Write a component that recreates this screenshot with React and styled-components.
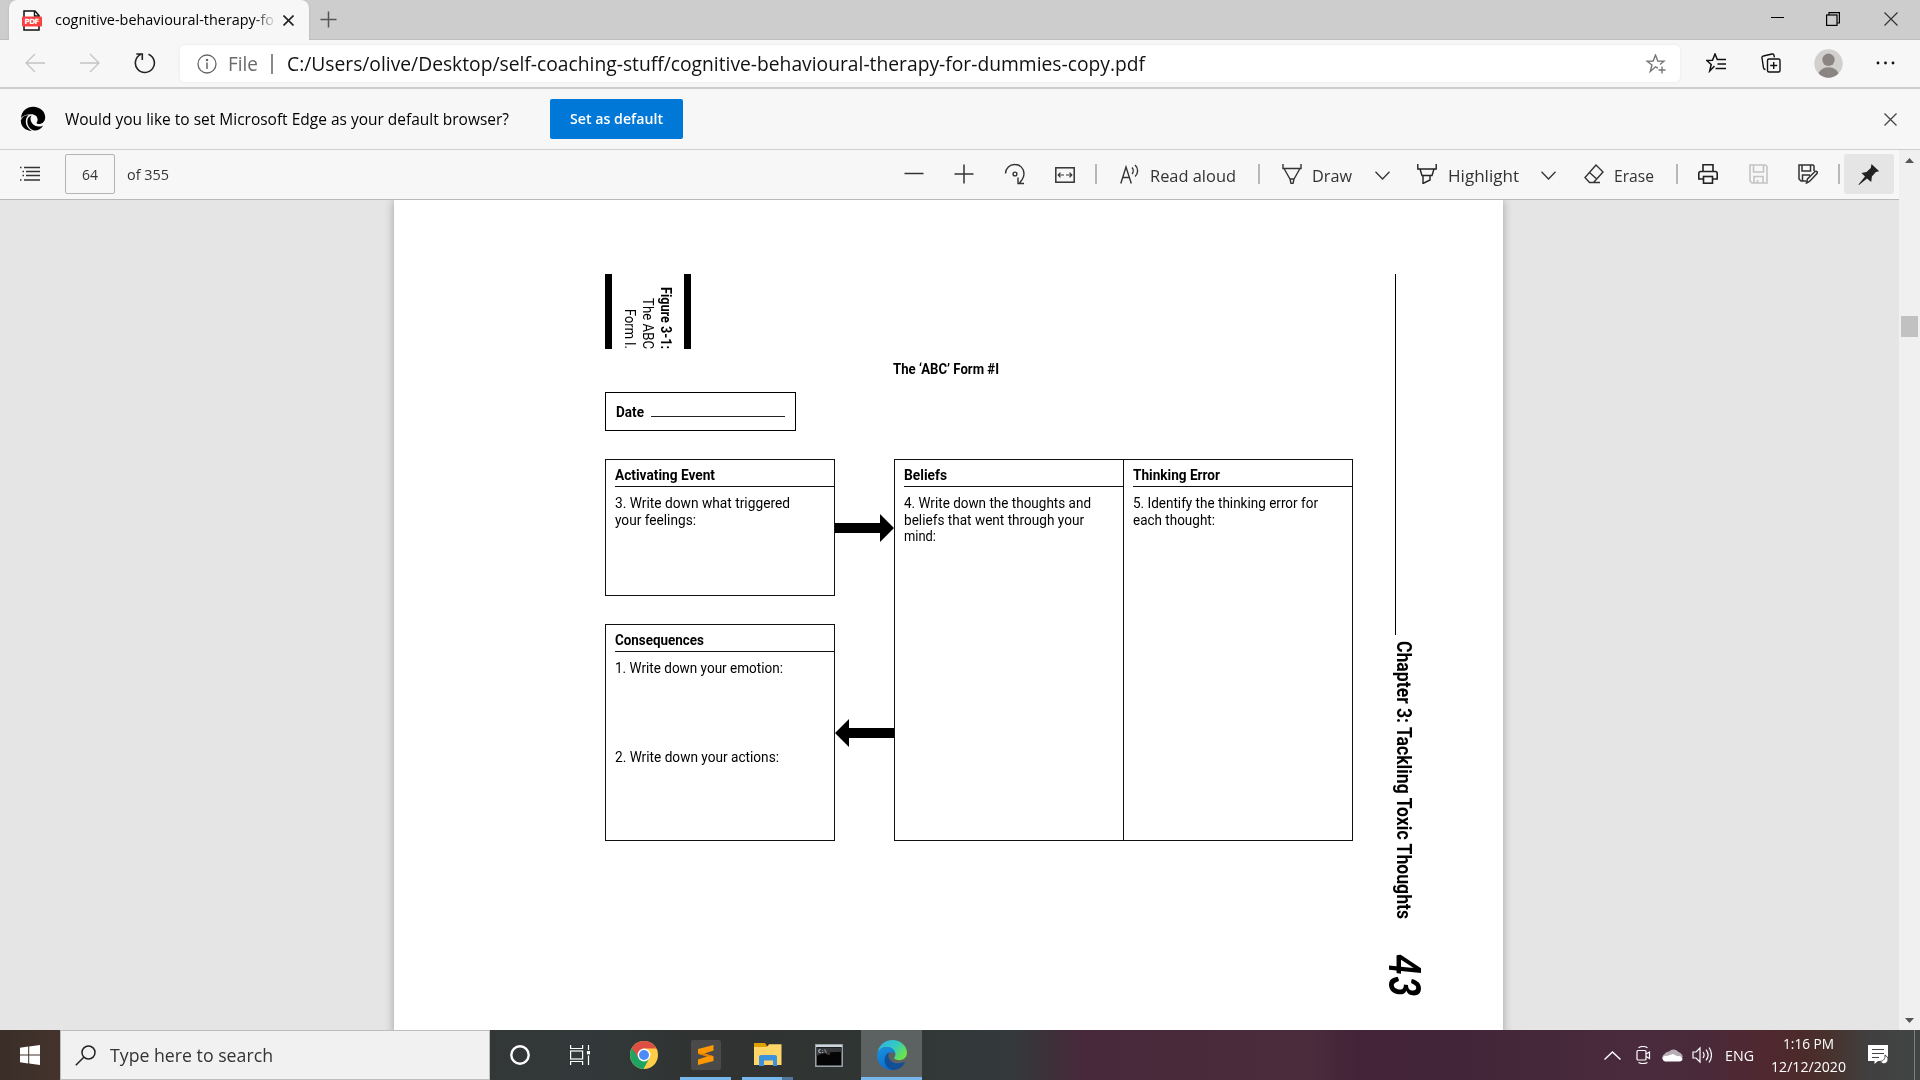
import React, { useLayoutEffect, useRef, useState } from "react";
import styled, { createGlobalStyle, css } from "styled-components";

const GlobalStyle = createGlobalStyle`
  * { box-sizing: border-box; }
  html, body { margin: 0; padding: 0; overflow: hidden; }
  body { font-family: "Open Sans", "Noto Sans", sans-serif; color: #000; }
  svg { display: block; flex: none; }
`;

/* ---------- fitted text: squeezes a line to the width it is given ---------- */
const FitBox = styled.span`
  display: block;
  flex: none;
  white-space: nowrap;
  ${(p) => (p.$vertical ? css`height: ${p.$size}px;` : css`width: ${p.$size}px;`)}
`;
const FitInner = styled.span`
  display: inline-block;
  white-space: nowrap;
  transform-origin: 0 0;
`;
function Fit({ size, vertical, children }) {
  const ref = useRef(null);
  const [scale, setScale] = useState(1);
  useLayoutEffect(() => {
    const box = getComputedStyle(ref.current);
    const natural = parseFloat(vertical ? box.height : box.width);
    if (natural) setScale(size / natural);
  }, [size, vertical, children]);
  return (
    <FitBox $size={size} $vertical={vertical}>
      <FitInner ref={ref} style={{ transform: vertical ? `scaleY(${scale})` : `scaleX(${scale})` }}>
        {children}
      </FitInner>
    </FitBox>
  );
}

/* ---------- shell ---------- */
const Screen = styled.div`
  width: 1920px;
  height: 1080px;
  display: flex;
  flex-direction: column;
  background: #f7f7f7;
  overflow: hidden;
`;
const Slot = styled.div`
  flex: none;
  display: flex;
  align-items: center;
  justify-content: center;
  width: ${(p) => p.$w}px;
  height: ${(p) => p.$h || 24}px;
  margin-left: ${(p) => p.$ml || 0}px;
  margin-top: ${(p) => p.$mt || 0}px;
`;
const Spacer = styled.div`flex: 1;`;

/* ---------- tab strip ---------- */
const TabStrip = styled.div`
  height: 40px;
  flex: none;
  display: flex;
  background: #cdcdcd;
  padding-left: 9px;
  box-shadow: inset 0 -1px 0 #bdbdbd;
`;
const Tab = styled.div`
  width: 300px;
  height: 40px;
  background: #f7f7f7;
  border-radius: 8px 8px 0 0;
  box-shadow: 0 0 2px #aaa;
  clip-path: inset(0 -3px 0 -3px);
  display: flex;
  align-items: center;
  padding-left: 13px;
`;
const TabTitle = styled.div`
  width: 219px;
  margin-left: 13px;
  font-size: 14.5px;
  line-height: 20px;
  mask-image: linear-gradient(90deg, #000 91%, transparent 101%);
`;

/* ---------- address row ---------- */
const AddressRow = styled.div`
  height: 49px;
  flex: none;
  display: flex;
  align-items: center;
  padding: 0 0 1px 25px;
  border-bottom: 2px solid #cccccc;
`;
const AddressBox = styled.div`
  width: 1500px;
  height: 37px;
  margin-left: 24px;
  margin-top: 1px;
  border-radius: 5px;
  background: #fff;
  box-shadow: 0 0 3px #e6e6e6;
  display: flex;
  align-items: center;
  padding-left: 17px;
`;
const AddressText = styled.div`
  font-size: 19.5px;
  line-height: 28px;
  color: ${(p) => p.$color};
  margin-left: ${(p) => p.$ml}px;
`;
const Bar = styled.div`
  flex: none;
  width: 2px;
  height: 20px;
  background: ${(p) => p.$color || "#b8b8b8"};
  margin-left: ${(p) => p.$ml}px;
`;

/* ---------- info bar ---------- */
const InfoBar = styled.div`
  height: 61px;
  flex: none;
  display: flex;
  align-items: center;
  padding-left: 20px;
  border-bottom: 1px solid #cfcfcf;
`;
const InfoText = styled.div`
  margin-left: 20px;
  font-size: 15.5px;
  line-height: 22px;
`;
const DefaultButton = styled.button`
  width: 133px;
  height: 40px;
  margin: 0 0 0 41px;
  border: 0;
  border-radius: 2px;
  background: #0078d7;
  color: #fff;
  padding: 0 0 0 20px;
  text-align: left;
  font: 600 14.5px/22px "Open Sans", "Noto Sans", sans-serif;
`;

/* ---------- pdf viewer ---------- */
const Viewer = styled.div`
  height: 880px;
  flex: none;
  display: flex;
`;
const ViewerMain = styled.div`
  width: 1899px;
  display: flex;
  flex-direction: column;
`;
const Tools = styled.div`
  height: 50px;
  flex: none;
  display: flex;
  align-items: center;
  padding: 0 0 1px 20px;
  border-bottom: 1px solid #b9b9b9;
  color: #333;
`;
const PageInput = styled.div`
  width: 50px;
  height: 40px;
  margin-left: 25px;
  border: 1px solid #b4b4b4;
  border-radius: 2px;
  display: flex;
  align-items: center;
  justify-content: center;
  padding-top: 1px;
  font-size: 14.5px;
  line-height: 20px;
`;
const PageTotal = styled.div`
  margin: 1px 0 0 12px;
  font-size: 14.5px;
  line-height: 20px;
`;
const ToolLabel = styled.div`
  margin-left: ${(p) => p.$ml}px;
  margin-top: 4px;
  font-size: 16.5px;
  line-height: 24px;
`;
const PinButton = styled.div`
  width: 50px;
  height: 40px;
  margin-left: 4px;
  border-radius: 3px;
  background: #e5e5e5;
  display: flex;
  align-items: center;
  justify-content: center;
`;
const ScrollTrack = styled.div`
  width: 21px;
  background: #f0f0f0;
  display: flex;
  flex-direction: column;
  align-items: center;
  padding-top: 8px;
`;
const ScrollThumb = styled.div`
  width: 17px;
  height: 21px;
  background: #c1c1c1;
  margin: 153px 0 auto;
`;
const Canvas = styled.div`
  flex: 1;
  background: #e5e5e5;
  padding-left: 394px;
  overflow: hidden;
`;
const Paper = styled.div`
  width: 1109px;
  height: 860px;
  background: #fff;
  box-shadow: 0 0 9px rgba(0, 0, 0, 0.3);
  padding: 74px 0 0 211px;
  display: flex;
  font-family: Roboto, "Liberation Sans", sans-serif;
  font-size: 15px;
  line-height: 16.5px;
`;
const FormArea = styled.div`
  width: 749px;
  flex: none;
`;
const Caption = styled.div`
  width: 86px;
  height: 75px;
  border: solid #000;
  border-width: 0 7px;
  writing-mode: vertical-rl;
  display: flex;
  flex-direction: column;
  align-items: flex-end;
  padding-right: 9px;
  font-size: 15px;
  line-height: 18.2px;
  font-weight: 400;
`;
const Strong = styled.div`font-weight: 700;`;
const FormTitle = styled.div`
  margin: 11px 0 0 288px;
  font-weight: 700;
  line-height: 18px;
`;
const DateBox = styled.div`
  width: 191px;
  height: 39px;
  margin-top: 14px;
  border: 1px solid #000;
  display: flex;
  align-items: center;
  padding: 2px 0 0 9.5px;
  font-weight: 700;
`;
const DateRule = styled.div`
  width: 134px;
  height: 1px;
  margin: 7px 0 0 7.5px;
  background: #222;
`;
const Columns = styled.div`
  margin-top: 28px;
  height: 382px;
  display: flex;
`;
const LeftColumn = styled.div`
  width: 230px;
  display: flex;
  flex-direction: column;
  justify-content: space-between;
`;
const Panel = styled.section`
  width: 230px;
  height: ${(p) => p.$h}px;
  margin-left: ${(p) => p.$ml || 0}px;
  border: 1px solid #111;
  padding-left: 9px;
`;
const PanelHead = styled.div`
  height: 27px;
  padding-top: 4px;
  line-height: 23px;
  font-weight: 700;
  border-bottom: 1px solid #111;
`;
const PanelText = styled.div`
  margin-top: ${(p) => p.$mt || 8.4}px;
`;
const Arrows = styled.div`
  width: 59px;
  flex: none;
  padding-top: 55px;
  display: flex;
  flex-direction: column;
  gap: 177px;
`;
const SideColumn = styled.div`
  margin-left: 33px;
  width: 36px;
  display: flex;
  flex-direction: column;
`;
const SideRule = styled.div`
  width: 1px;
  height: 361px;
  margin-left: 8px;
  background: #000;
`;
const Chapter = styled.div`
  writing-mode: vertical-rl;
  font-size: 21px;
  line-height: 24px;
  font-weight: 700;
  margin: 6px 0 0 5px;
  width: 24px;
`;
const Folio = styled.div`
  writing-mode: vertical-rl;
  font: italic 900 44px/48px Lato, "Open Sans", sans-serif;
  margin: 35px 0 0 -5px;
  width: 48px;
`;

/* ---------- taskbar ---------- */
const Taskbar = styled.div`
  height: 50px;
  flex: none;
  display: flex;
  color: #fff;
  background: linear-gradient(90deg, #3a2e28 0, #44332c 60px, #333738 490px, #323839 600px, #303332 690px, #303433 860px,
    #343a3c 1010px, #3b3238 1044px, #48293c 1080px, #492a3a 1200px, #4a2c3c 1310px, #422338 1360px, #44263a 1480px,
    #4a2b3d 1640px, #492a3a 1700px, #50282f 1765px, #4c2a2a 1800px, #48322e 1830px, #414040 1870px, #424545 1920px);
`;
const StartButton = styled.div`
  width: 60px;
  display: flex;
  align-items: center;
  justify-content: center;
`;
const SearchBox = styled.div`
  width: 430px;
  height: 50px;
  background: #f1f1f1;
  border: 1px solid #bdbdbd;
  color: #333;
  display: flex;
  align-items: center;
  padding-left: 14px;
  font-size: 18.5px;
  line-height: 26px;
`;
const SearchLabel = styled.div`margin: -1px 0 0 14px;`;
const TaskButton = styled.div`
  width: ${(p) => p.$w}px;
  height: 50px;
  flex: none;
  display: flex;
  align-items: center;
  justify-content: center;
  margin-left: ${(p) => p.$ml || 0}px;
  background: ${(p) => (p.$active ? "#5c6162" : "transparent")};
  border-bottom: 3px solid ${(p) => (p.$open ? "#78b6ee" : "transparent")};
  padding-top: 3px;
`;
const GroupedEdge = styled.div`
  width: 11px;
  height: 3px;
  margin-top: 47px;
  background: #52779a;
`;
const Lang = styled.div`
  margin-left: 13px;
  font-size: 15px;
  line-height: 50px;
`;
const Clock = styled.div`
  width: 77px;
  margin-left: 16px;
  font-size: 15px;
  line-height: 23px;
  padding-top: 2px;
  display: flex;
  flex-direction: column;
  align-items: center;
`;
const PeekEdge = styled.div`
  width: 1px;
  height: 50px;
  margin: 0 5px 0 25px;
  background: #7d8080;
`;

/* ---------- icons ---------- */
const Svg = ({ w, h = w, sw = 1.3, c = "#333", children }) => (
  <svg width={w} height={h} viewBox={`0 0 ${w} ${h}`} fill="none" stroke={c} strokeWidth={sw}>
    {children}
  </svg>
);
const Cross = ({ s = 13, c = "#222", sw = 1.3 }) => (
  <Svg w={s} c={c} sw={sw}><path d={`M.5 .5L${s - 0.5} ${s - 0.5}M${s - 0.5} .5L.5 ${s - 0.5}`} /></Svg>
);
const PdfIcon = () => (
  <svg width="20" height="21" viewBox="0 0 20 21">
    <path d="M2 9V1h11l4 4.5V20H2z" fill="#fff" stroke="#111" strokeWidth="1.5" />
    <path d="M12.5 1v5H17" fill="none" stroke="#111" strokeWidth="1.4" />
    <rect x="0" y="6.5" width="20" height="10" rx="1" fill="#fb4141" />
    <text x="10" y="14.4" textAnchor="middle" textLength="15" fontFamily="DejaVu Sans" fontSize="7.2" fontWeight="700" fill="#fff">PDF</text>
  </svg>
);
const Back = () => <Svg w={20} c="#c4c4c4"><path d="M20 10H1M10 1L1 10l9 9" /></Svg>;
const Forward = () => <Svg w={20} c="#c4c4c4"><path d="M0 10h19M10 1l9 9-9 9" /></Svg>;
const Refresh = () => (
  <Svg w={22} c="#222" sw={1.6}><path d="M14.5 2.2A9.5 9.5 0 1 1 6.8 2.4M2.3 2h6v6" /></Svg>
);
const Info = () => (
  <Svg w={20} c="#666" sw={1.3}><circle cx="10" cy="10" r="9" /><path d="M10 8.5V15" strokeWidth="1.5" /><circle cx="10" cy="6" r=".6" fill="#666" /></Svg>
);
const StarAdd = () => (
  <Svg w={20} c="#767676" sw={1.4}>
    <path d="M12 14.2L9.500 12.8 4.300 17.500 6 11 1 7.200l6.200-.2L9.500 1l2.300 6 6.200.2-4 3.300M16 12.500v7M12.500 16h7" />
  </Svg>
);
const FavList = () => (
  <Svg w={20} c="#111" sw={1.5}>
    <path d="M8.500 13L3.700 18 5.200 11.500.8 7.500l5.700-.3L9 1l2.300 5.500H20M11.500 11H20M9.500 15.500H20" />
  </Svg>
);
const Collections = () => (
  <Svg w={20} c="#111" sw={1.4}>
    <rect x="6.500" y="6" width="12.500" height="13" rx="1.500" /><path d="M12.700 9v7M9.200 12.500h7M4.500 16.500c-1 0-1.800-.7-2-1.700L1 5c-.2-1 .4-1.800 1.400-2L11 1c1-.2 1.800.3 2 1.300l.4 2" />
  </Svg>
);
const Avatar = () => (
  <svg width="29" height="29" viewBox="0 0 29 29">
    <defs><clipPath id="av"><circle cx="14.500" cy="14.500" r="14.200" /></clipPath></defs>
    <circle cx="14.500" cy="14.500" r="14.200" fill="#d2d0ce" />
    <g clipPath="url(#av)" fill="#8a8583"><circle cx="14.500" cy="10.800" r="6.200" /><ellipse cx="14.500" cy="25.500" rx="10" ry="7.200" /></g>
  </svg>
);
const Dots = () => (
  <svg width="19" height="4" viewBox="0 0 19 4" fill="#111"><circle cx="2" cy="2" r="1.400" /><circle cx="9.500" cy="2" r="1.400" /><circle cx="17" cy="2" r="1.400" /></svg>
);
const EdgeMono = () => (
  <svg width="26" height="26" viewBox="0 0 26 26">
    <path d="M1 12C1.500 5 7 .8 13 .8c7.500 0 12.200 5.200 12.200 10.400 0 3.600-2.200 6.400-5.600 6.800-1.700.2-3-.4-3-1.200 0-.7 1-1.200 1-3.300 0-2.900-2.500-5.300-6.300-5.300C6.500 8.200 2.800 9.500 1 12z" fill="#000" />
    <path d="M.8 14.500C2 10.600 5 9 8.600 9.300 6.700 10.800 5.800 13 5.800 15.500c0 4 2.600 7.700 6.200 9.400C5.500 24.800.8 20.500.8 14.500z" fill="#000" />
    <path d="M7.300 15.500c0-3 1.700-5.300 4.300-5.900-1 1.100-1.200 2.500-1 4 .5 4 4 7 8 7 1.700 0 3.200-.4 4.600-1.200-2 3.200-5 5.200-8.500 5.200-4.200-.5-7.400-4.700-7.400-9.100z" fill="#000" />
  </svg>
);
const ListIcon = () => (
  <Svg w={20} h={16} c="#333" sw={1.3}>
    <path d="M4 1.500h16M6 5.500h14M6 9.500h14M4 14h16" /><path d="M0 1.500h1.500M2.500 5.500H4M2.500 9.500H4M0 14h1.500" />
  </Svg>
);
const Minus = () => <Svg w={20} sw={1.5}><path d="M.5 9.500h19" /></Svg>;
const Plus = ({ s = 20, c = "#333", sw = 1.5 }) => <Svg w={s} c={c} sw={sw}><path d={`M.5 ${s / 2}h${s - 1}M${s / 2} .5v${s - 1}`} /></Svg>;
const Rotate = () => (
  <Svg w={22} c="#333" sw={1.4}><path d="M1.500 10.500a9 9 0 0 1 9.500-9c5 0 9 4 9 9 0 4-2 6.800-4.500 9.500M14 14.500V20.500h6" /><circle cx="11" cy="11" r="1.900" /></Svg>
);
const FitWidth = () => (
  <Svg w={20} h={16} c="#333" sw={1.5}><rect x=".8" y=".8" width="18.400" height="14.400" /><path d="M3.500 8H9M11 8h5.500M5.500 5.700L3.200 8l2.300 2.300M14.500 5.700L16.800 8l-2.300 2.300" strokeWidth="1.2" /></Svg>
);
const ReadAloud = () => (
  <Svg w={20} c="#333" sw={1.4}><path d="M.8 19.500L6 3l5.300 16.500M2.500 13.500h7M12 3.500c1.600 1.800 1.600 4.700 0 6.500M15 1c3.500 3 3.500 8.500 0 11.500" /></Svg>
);
const Pen = () => (
  <Svg w={20} c="#333" sw={1.4}><path d="M1 0v4.500h18V0M2 4.500l6 10.500h4l6-10.500M8 15l1 4.500h2l1-4.500" /></Svg>
);
const Marker = () => (
  <Svg w={20} c="#222" sw={1.4}><path d="M.8 0v5h18.400V0M3 5l2 6.500h10L17 5M6 11.500v8l7-3.500v-4.500" /></Svg>
);
const Chevron = ({ w = 15, c = "#333" }) => <Svg w={w} h={9} c={c} sw={1.3}><path d={`M.5 .8L${w / 2} 8l${w / 2 - 0.5}-7.200`} /></Svg>;
const Eraser = () => (
  <Svg w={20} c="#333" sw={1.4}><path d="M12 1l7 7-9.500 10.500H5.500L1 13.500zM5.500 8.500l7.500 6.800M7 18.500h9" /></Svg>
);
const Printer = () => (
  <Svg w={20} c="#222" sw={1.6}><path d="M5 7V.8h10V7M5 15H.8V9.500c0-1.200.8-2 2-2h14.400c1.200 0 2 .8 2 2V15H15" /><rect x="5.500" y="12.500" width="9" height="6.700" /></Svg>
);
const Save = () => (
  <Svg w={19} h={20} c="#c4c4c4" sw={1.6}><path d="M1 1h15.500L18 2.500V19H3l-2-2zM4.500 1v7h10V1M5 19v-6.500h9V19M8.500 16v3" /></Svg>
);
const SaveAs = () => (
  <Svg w={20} c="#333" sw={1.5}><path d="M8 17H3l-2-2V1h14l1 1v5M4 1v6h8.500V1M4.500 17v-6H12M8.500 19l1-4L17 7.500c1.500-.8 2.800.5 2 2L11.500 17.500z" /></Svg>
);
const Pin = () => (
  <svg width="22" height="21" viewBox="0 0 22 21"><path d="M13.500 0l7.700 7.200-3.300.9-4 4.500-.7 5.300L9 14.500 1 21l-.5-.5 6.500-8L3.500 9l5-1 4.300-4z" fill="#222" /></svg>
);
const Tri = ({ down }) => (
  <svg width="9" height="5" viewBox="0 0 9 5"><path d={down ? "M0 0h9L4.500 5z" : "M0 5h9L4.500 0z"} fill="#555" /></svg>
);
const Arrow = ({ left }) => (
  <svg width="59" height="28" viewBox="0 0 59 28"><path d={left ? "M0 14L14 0v9h45v10H14v9z" : "M59 14L45 0v9H0v10h45v9z"} fill="#000" /></svg>
);
const WinLogo = () => (
  <svg width="20" height="20" viewBox="0 0 20 20" fill="#fff"><path d="M0 2.800L8.200 1.600V9.500H0zM9.200 1.500L20 0v9.500H9.200zM0 10.500h8.200v7.900L0 17.300zM9.200 10.500H20V20L9.200 18.500z" /></svg>
);
const Magnifier = () => <Svg w={21} c="#222" sw={1.5}><circle cx="13.500" cy="7.500" r="6.500" /><path d="M9 12L.8 20.200" /></Svg>;
const TaskView = () => (
  <Svg w={20} h={20} c="#fff" sw={1.2}><path d="M.6 0v3.500h12V0M.6 20v-3.500h12V20M18.500 0v5M18.500 10.500V20" /><rect x=".6" y="6" width="12" height="8" /><rect x="17.500" y="6.700" width="2" height="2" fill="#fff" /></Svg>
);
const Chrome = () => (
  <svg width="28" height="28" viewBox="0 0 28 28">
    <circle cx="14" cy="14" r="14" fill="#ffcd46" />
    <path d="M14 14L1.900 7A14 14 0 0 0 13.500 28l6-11z" fill="#1ea362" />
    <path d="M14 7.500h12.400A14 14 0 0 0 1.900 7l6.500 10z" fill="#dd4f43" />
    <circle cx="14" cy="14" r="6.400" fill="#fff" /><circle cx="14" cy="14" r="5" fill="#4c8bf5" />
  </svg>
);
const Sublime = () => (
  <svg width="30" height="30" viewBox="0 0 30 30">
    <rect width="30" height="30" rx="2" fill="#4a4a4a" />
    <path d="M22.500 5v5.500l-9 3 9 2.700V21L7 25v-5.500l9-3-9-2.700V9z" fill="#ff9800" />
    <path d="M7 13.800l9 2.700 6.500-.3-9-2.700z" fill="#e07c00" />
  </svg>
);
const Explorer = () => (
  <svg width="28" height="24" viewBox="0 0 28 24">
    <path d="M0 0h11l2 3h14v4H0z" fill="#e0a100" /><path d="M0 4h13l2-2.800h12.500V22H0z" fill="#ffd667" />
    <path d="M5 23v-9c0-1.100.9-2 2-2h14c1.100 0 2 .9 2 2v9h-4v-5.500h-9V23z" fill="#3c92dc" />
  </svg>
);
const Terminal = () => (
  <svg width="28" height="23" viewBox="0 0 28 23">
    <rect x=".8" y=".8" width="26.400" height="21.400" fill="#050505" stroke="#9ba7ae" strokeWidth="1.500" />
    <path d="M1 1h26v2H1z" fill="#cdd6dc" /><path d="M1.500 3.500h25V8C17 7.500 8 8.500 1.500 12z" fill="#34383b" />
    <text x="3" y="8.500" fontFamily="DejaVu Sans Mono" fontSize="5" fontWeight="700" fill="#ddd">C:\_</text>
  </svg>
);
const EdgeLogo = () => (
  <svg width="30" height="30" viewBox="0 0 30 30">
    <defs>
      <linearGradient id="ea" x1="0" y1="0" x2="1" y2=".6"><stop offset="0" stopColor="#2faee4" /><stop offset=".55" stopColor="#33c9c6" /><stop offset="1" stopColor="#6be34a" /></linearGradient>
      <linearGradient id="eb" x1="0" y1="0" x2=".4" y2="1"><stop offset="0" stopColor="#1b93dc" /><stop offset="1" stopColor="#0a6fd0" /></linearGradient>
    </defs>
    <path d="M.6 12C2 5 8 0 15 0c9 0 15 6.200 15 12.600 0 4.500-3.200 7.600-7.500 7.600-3.500 0-5.400-1-5.400-2.100 0-.8 1.300-1.300 1.300-3.600C18.400 10 14 7 9.500 7 5.500 7 2.500 9 .6 12z" fill="url(#ea)" />
    <path d="M0 15.500C0 10.500 4.500 7 9.500 7c5.500 0 8.900 3.500 8.900 7-1.500-2.600-6-2.500-7.800.8C8.500 19 10.500 27 17 29.800 7.500 31 0 24 0 15.500z" fill="url(#eb)" />
    <path d="M12.500 12.300c-2 2.200-1.300 6 1.300 8.500 3.200 3 8.700 3.200 13.200 1.300.7-.3 1 .2.700.8C25.500 27 21 30 16 30 10.500 29 7.500 24.500 7.500 20c0-3.500 2-6.500 5-7.700z" fill="#114f96" />
  </svg>
);
const MeetNow = () => (
  <Svg w={15} h={18} c="#fff" sw={1.2}><rect x="1" y="4.500" width="9" height="9.500" rx="1" /><path d="M10 8l3.500-2v6.500L10 10.500M2.500 1.800C5 .3 9 .3 11.500 1.800M2.500 16.500c2.500 1.300 6.500 1.300 9 0" /></Svg>
);
const Cloud = () => (
  <svg width="21" height="14" viewBox="0 0 21 14"><path d="M4 13.500A4 4 0 0 1 2.500 6 5 5 0 0 1 7 3.500 6 6 0 0 1 16.500 4c3 1 4 3 4.300 5z" fill="#b8adb5" /><path d="M4.500 13.500C1.500 13.500.500 11.500.5 10.200.5 8.500 3 7.500 5 8l6-2 4 2c3-.5 5.500.8 5.500 3 0 1.500-1.200 2.500-3 2.500z" fill="#fff" /></svg>
);
const Speaker = () => (
  <Svg w={20} h={18} c="#fff" sw={1.2}><path d="M1 6v6h3l4 4V2L4 6zM11 6c1.300 1.800 1.300 4.200 0 6M14 3.700c2.600 3.200 2.600 7.400 0 10.600M17 1.500c3.300 4.300 3.300 10.700 0 15" /></Svg>
);
const Notification = () => (
  <svg width="21" height="21" viewBox="0 0 21 21">
    <path d="M0 0h20v16H10l-3.500 3V16H0z" fill="#fff" /><path d="M4 4.500h12M4 8.500h12M4 12.500h7" stroke="#444" strokeWidth="1.200" />
    <path d="M17 10c.5 3.500-1.500 6-5 6.500 2.500 3.500 7.500 2.500 8-1.500.1-2-1-4-3-5z" fill="#fff" stroke="#444" strokeWidth="1" />
  </svg>
);

export default function App() {
  return (
    <>
      <GlobalStyle />
      <Screen>
        <TabStrip>
          <Tab>
            <PdfIcon />
            <TabTitle><Fit size={219}>cognitive-behavioural-therapy-fo</Fit></TabTitle>
            <Slot $w={13} $ml={8} $mt={1}><Cross s={11} sw={1.6} /></Slot>
          </Tab>
          <Slot $w={17} $ml={11} $h={38}><Plus s={17} c="#555" sw={1.5} /></Slot>
          <Spacer />
          <Slot $w={13} $h={34}><Svg w={13} c="#000" sw={1}><path d="M0 6.500h13" /></Svg></Slot>
          <Slot $w={14} $ml={42} $h={37}><Svg w={14} c="#000" sw={1.2}><rect x=".6" y="3" width="10.400" height="10.400" /><path d="M3 3V.6h10.400V11H11" /></Svg></Slot>
          <Slot $w={14} $ml={44} $h={37}><Cross s={14} c="#333" sw={1.2} /></Slot>
          <Slot $w={22} />
        </TabStrip>

        <AddressRow>
          <Back />
          <Slot $w={20} $ml={35}><Forward /></Slot>
          <Slot $w={22} $ml={34}><Refresh /></Slot>
          <AddressBox>
            <Info />
            <AddressText $color="#6b6b6b" $ml={11}><Fit size={30}>File</Fit></AddressText>
            <Bar $ml={13} $color="#8a8a8a" />
            <AddressText $color="#111" $ml={14}>
              <Fit size={858}>C:/Users/olive/Desktop/self-coaching-stuff/cognitive-behavioural-therapy-for-dummies-copy.pdf</Fit>
            </AddressText>
            <Spacer />
            <StarAdd />
            <Slot $w={14} />
          </AddressBox>
          <Slot $w={20} $ml={26}><FavList /></Slot>
          <Slot $w={20} $ml={35}><Collections /></Slot>
          <Slot $w={29} $ml={33} $h={29}><Avatar /></Slot>
          <Slot $w={19} $ml={33}><Dots /></Slot>
        </AddressRow>

        <InfoBar>
          <Slot $w={25}><EdgeMono /></Slot>
          <InfoText><Fit size={444}>Would you like to set Microsoft Edge as your default browser?</Fit></InfoText>
          <DefaultButton><Fit size={93}>Set as default</Fit></DefaultButton>
          <Spacer />
          <Slot $w={13}><Cross s={13} c="#444" /></Slot>
          <Slot $w={23} />
        </InfoBar>

        <Viewer>
          <ViewerMain>
            <Tools>
              <ListIcon />
              <PageInput><Fit size={16}>64</Fit></PageInput>
              <PageTotal><Fit size={42}>of 355</Fit></PageTotal>
              <Slot $w={20} $ml={735}><Minus /></Slot>
              <Slot $w={20} $ml={30}><Plus /></Slot>
              <Slot $w={22} $ml={30}><Rotate /></Slot>
              <Slot $w={20} $ml={29} $mt={2}><FitWidth /></Slot>
              <Bar $ml={20} />
              <Slot $w={20} $ml={23}><ReadAloud /></Slot>
              <ToolLabel $ml={10}><Fit size={86}>Read aloud</Fit></ToolLabel>
              <Bar $ml={22} />
              <Slot $w={20} $ml={22}><Pen /></Slot>
              <ToolLabel $ml={10}><Fit size={40}>Draw</Fit></ToolLabel>
              <Slot $w={15} $ml={23} $mt={2}><Chevron /></Slot>
              <Slot $w={20} $ml={27}><Marker /></Slot>
              <ToolLabel $ml={11}><Fit size={71}>Highlight</Fit></ToolLabel>
              <Slot $w={15} $ml={22} $mt={2}><Chevron /></Slot>
              <Slot $w={20} $ml={28}><Eraser /></Slot>
              <ToolLabel $ml={10}><Fit size={40}>Erase</Fit></ToolLabel>
              <Bar $ml={22} />
              <Slot $w={20} $ml={20}><Printer /></Slot>
              <Slot $w={20} $ml={30}><Save /></Slot>
              <Slot $w={20} $ml={30}><SaveAs /></Slot>
              <Bar $ml={20} />
              <PinButton><Pin /></PinButton>
            </Tools>
            <Canvas>
              <Paper>
                <FormArea>
                  <Caption>
                    <Strong><Fit vertical size={62}>Figure 3-1:</Fit></Strong>
                    <Fit vertical size={51}>The ABC</Fit>
                    <Fit vertical size={40}>Form I.</Fit>
                  </Caption>
                  <FormTitle><Fit size={106}>The ‘ABC’ Form #I</Fit></FormTitle>
                  <DateBox>
                    <Fit size={28}>Date</Fit>
                    <DateRule />
                  </DateBox>
                  <Columns>
                    <LeftColumn>
                      <Panel $h={137}>
                        <PanelHead><Fit size={100}>Activating Event</Fit></PanelHead>
                        <PanelText>
                          <Fit size={175}>3. Write down what triggered</Fit>
                          <Fit size={81}>your feelings:</Fit>
                        </PanelText>
                      </Panel>
                      <Panel $h={217}>
                        <PanelHead><Fit size={89}>Consequences</Fit></PanelHead>
                        <PanelText><Fit size={168}>1. Write down your emotion:</Fit></PanelText>
                        <PanelText $mt={72.3}><Fit size={164}>2. Write down your actions:</Fit></PanelText>
                      </Panel>
                    </LeftColumn>
                    <Arrows><Arrow /><Arrow left /></Arrows>
                    <Panel $h={382}>
                      <PanelHead><Fit size={43}>Beliefs</Fit></PanelHead>
                      <PanelText>
                        <Fit size={187}>4. Write down the thoughts and</Fit>
                        <Fit size={180}>beliefs that went through your</Fit>
                        <Fit size={32}>mind:</Fit>
                      </PanelText>
                    </Panel>
                    <Panel $h={382} $ml={-1}>
                      <PanelHead><Fit size={87}>Thinking Error</Fit></PanelHead>
                      <PanelText>
                        <Fit size={185}>5. Identify the thinking error for</Fit>
                        <Fit size={82}>each thought:</Fit>
                      </PanelText>
                    </Panel>
                  </Columns>
                </FormArea>
                <SideColumn>
                  <SideRule />
                  <Chapter><Fit vertical size={278}>Chapter 3: Tackling Toxic Thoughts</Fit></Chapter>
                  <Folio><Fit vertical size={43}>43</Fit></Folio>
                </SideColumn>
              </Paper>
            </Canvas>
          </ViewerMain>
          <ScrollTrack>
            <Tri />
            <ScrollThumb />
            <Tri down />
            <Slot $w={9} $h={7} />
          </ScrollTrack>
        </Viewer>

        <Taskbar>
          <StartButton><WinLogo /></StartButton>
          <SearchBox>
            <Magnifier />
            <SearchLabel><Fit size={163}>Type here to search</Fit></SearchLabel>
          </SearchBox>
          <TaskButton $w={60}><Svg w={20} c="#fff" sw={2.4}><circle cx="10" cy="10" r="8.700" /></Svg></TaskButton>
          <TaskButton $w={60}><TaskView /></TaskButton>
          <TaskButton $w={51} $ml={8}><Chrome /></TaskButton>
          <TaskButton $w={51} $ml={11} $open><Sublime /></TaskButton>
          <TaskButton $w={40} $ml={11} $open><Slot $w={28} $ml={11}><Explorer /></Slot></TaskButton>
          <GroupedEdge />
          <TaskButton $w={51} $ml={10}><Terminal /></TaskButton>
          <TaskButton $w={61} $ml={7} $open $active><EdgeLogo /></TaskButton>
          <Spacer />
          <Slot $w={17} $h={50}><svg width="17" height="9" viewBox="0 0 17 9"><path d="M.5 8.500l8-7.500 8 7.500" fill="none" stroke="#fff" strokeWidth="1.400" /></svg></Slot>
          <Slot $w={15} $ml={15} $h={50}><MeetNow /></Slot>
          <Slot $w={21} $ml={11} $h={50}><Cloud /></Slot>
          <Slot $w={20} $ml={9} $h={50}><Speaker /></Slot>
          <Lang><Fit size={29}>ENG</Fit></Lang>
          <Clock>
            <Fit size={51}>1:16 PM</Fit>
            <Fit size={75}>12/12/2020</Fit>
          </Clock>
          <Slot $w={21} $ml={21} $h={50}><Notification /></Slot>
          <PeekEdge />
        </Taskbar>
      </Screen>
    </>
  );
}
